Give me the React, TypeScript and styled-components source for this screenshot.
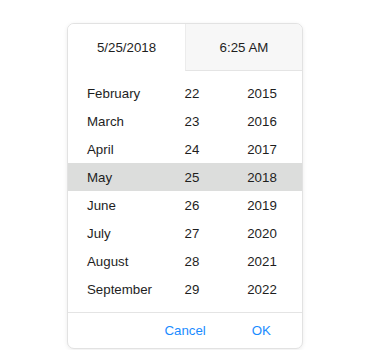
import React from "react";
import styled, { createGlobalStyle } from "styled-components";

const Global = createGlobalStyle`
  html, body { margin: 0; padding: 0; background: #ffffff; }
  body { font-family: "Liberation Sans", Arial, sans-serif; }
`;

const Page = styled.div`
  width: 370px;
  height: 350px;
  padding-top: 23px;
  padding-left: 67px;
  box-sizing: border-box;
`;

const Card = styled.div`
  width: 236px;
  background: #fff;
  border-radius: 7px;
  border: 1px solid #e2e2e2;
  box-shadow: 0 1px 4px rgba(0, 0, 0, 0.08);
  overflow: hidden;
  box-sizing: border-box;
`;

const Tabs = styled.div`
  display: grid;
  grid-template-columns: 117px 1fr;
  height: 47px;
`;

const Tab = styled.div<{ $active?: boolean }>`
  display: flex;
  align-items: center;
  justify-content: center;
  font-size: 13.3px;
  color: #1e1e1e;
  background: ${(p) => (p.$active ? "#fff" : "#f7f7f7")};
  border-bottom: ${(p) => (p.$active ? "1px solid transparent" : "1px solid #e4e4e4")};
  border-left: ${(p) => (p.$active ? "none" : "1px solid #ececec")};
  box-sizing: border-box;
`;

const List = styled.div`
  padding: 8px 0 9px;
  border-bottom: 1px solid #e4e4e4;
`;

const Row = styled.div<{ $selected?: boolean }>`
  display: grid;
  grid-template-columns: 99px 50px 90px;
  height: 28px;
  align-items: center;
  font-size: 13.3px;
  color: #1e1e1e;
  background: ${(p) => (p.$selected ? "#dcdddc" : "transparent")};
`;

const Month = styled.span`
  padding-left: 19px;
`;

const Center = styled.span`
  text-align: center;
`;

const Footer = styled.div`
  height: 35px;
  display: flex;
  align-items: center;
  justify-content: flex-end;
  padding-right: 31px;
  gap: 46px;
`;

const Action = styled.button`
  border: none;
  background: none;
  padding: 0;
  font-family: "Liberation Sans", Arial, sans-serif;
  font-size: 13.3px;
  color: #1a8cff;
  cursor: pointer;
`;

const rows = [
  ["February", "22", "2015"],
  ["March", "23", "2016"],
  ["April", "24", "2017"],
  ["May", "25", "2018"],
  ["June", "26", "2019"],
  ["July", "27", "2020"],
  ["August", "28", "2021"],
  ["September", "29", "2022"],
];

export default function App() {
  return (
    <>
      <Global />
      <Page>
        <Card>
          <Tabs>
            <Tab $active>5/25/2018</Tab>
            <Tab>6:25 AM</Tab>
          </Tabs>
          <List>
            {rows.map(([m, d, y]) => (
              <Row key={m} $selected={m === "May"}>
                <Month>{m}</Month>
                <Center>{d}</Center>
                <Center>{y}</Center>
              </Row>
            ))}
          </List>
          <Footer>
            <Action>Cancel</Action>
            <Action>OK</Action>
          </Footer>
        </Card>
      </Page>
    </>
  );
}
